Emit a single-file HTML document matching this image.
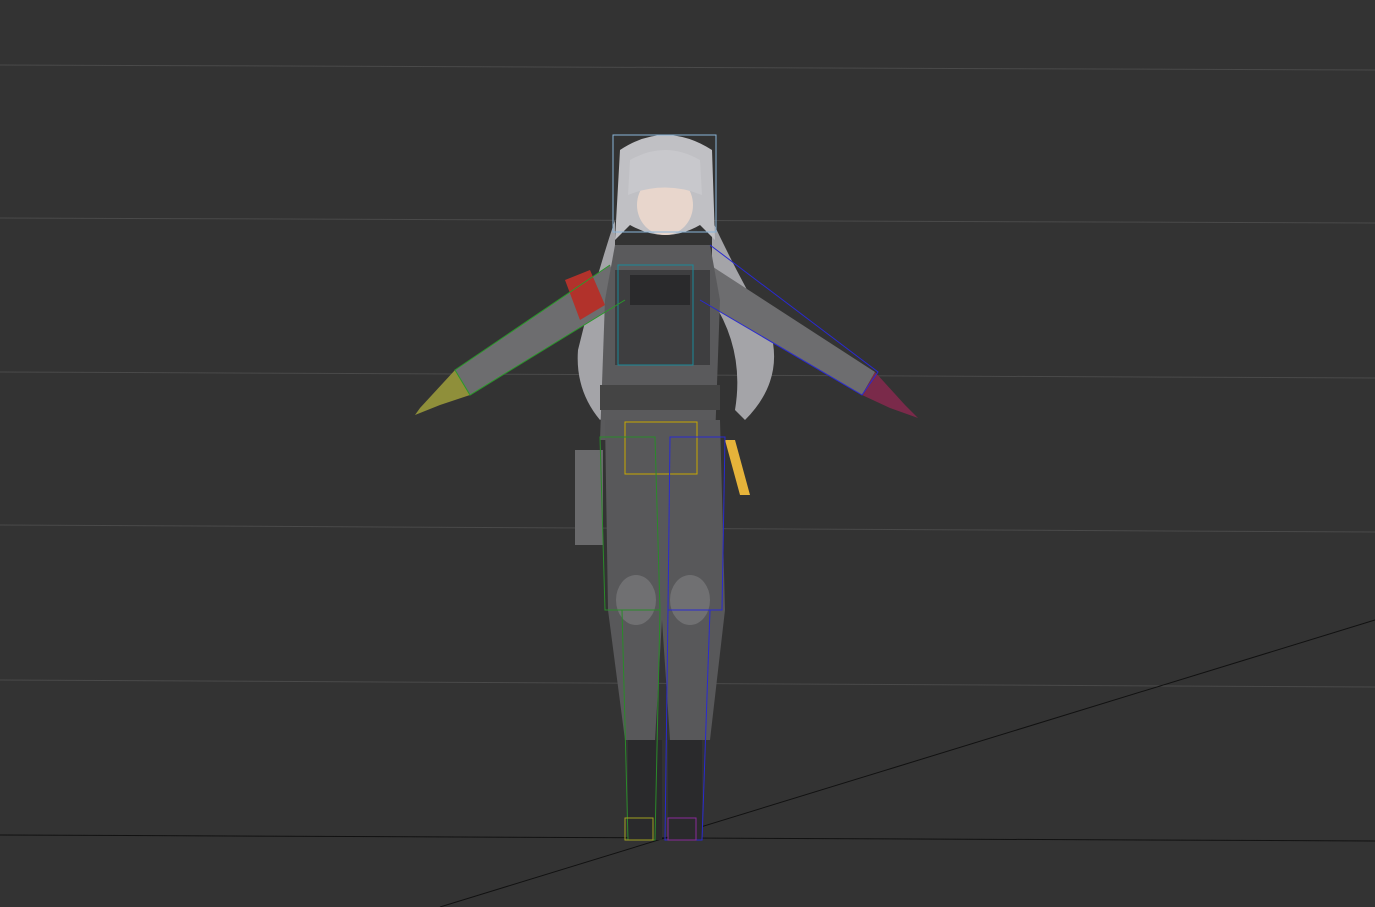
<!DOCTYPE html>
<html><head><meta charset="utf-8"><style>
html,body{margin:0;padding:0;background:#333333;}
svg{display:block}
</style></head><body>
<svg width="1375" height="907" viewBox="0 0 1375 907" xmlns="http://www.w3.org/2000/svg">
<rect width="1375" height="907" fill="#333333"/>
<g stroke="#4a4a4a" stroke-width="1" fill="none">
<line x1="0" y1="65" x2="1375" y2="70"/>
<line x1="0" y1="218" x2="1375" y2="223"/>
<line x1="0" y1="372" x2="1375" y2="378"/>
<line x1="0" y1="525" x2="1375" y2="532"/>
<line x1="0" y1="680" x2="1375" y2="687"/>
</g>
<line x1="0" y1="835" x2="1375" y2="841" stroke="#111" stroke-width="1"/>
<line x1="440" y1="907" x2="1375" y2="620" stroke="#111" stroke-width="1"/>

<!-- hair strands -->
<path d="M615 220 Q595 280 578 350 Q575 390 600 420 L612 410 Q605 350 615 300 Z" fill="#a4a4a8"/>
<path d="M712 220 Q740 280 770 330 Q785 380 745 420 L735 410 Q745 350 712 300 Z" fill="#a4a4a8"/>
<!-- arms -->
<path d="M610 265 L455 370 L470 395 L625 300 Z" fill="#6d6d6f"/>
<path d="M710 265 L875 372 L862 395 L700 300 Z" fill="#6d6d6f"/>
<path d="M565 280 L590 270 L605 305 L580 320 Z" fill="#b2322b"/>
<path d="M455 370 L470 395 L440 405 L415 415 L420 408 Z" fill="#8f8f3a"/>
<path d="M875 372 L862 395 L890 408 L918 418 L905 405 Z" fill="#7a2a4a"/>
<!-- torso -->
<path d="M615 245 L710 245 L720 300 L715 440 L600 440 L605 300 Z" fill="#5a5a5c"/>
<rect x="615" y="270" width="95" height="95" fill="#3e3e40"/>
<rect x="630" y="275" width="60" height="30" fill="#2a2a2c"/>
<rect x="600" y="385" width="120" height="25" fill="#444"/>
<!-- hips/legs -->
<path d="M605 420 L720 420 L725 610 L710 740 L670 740 L662 620 L655 740 L625 740 L608 610 Z" fill="#58585a"/>
<ellipse cx="636" cy="600" rx="20" ry="25" fill="#707072"/>
<ellipse cx="690" cy="600" rx="20" ry="25" fill="#707072"/>
<rect x="575" y="450" width="28" height="95" fill="#6a6a6c"/>
<path d="M725 440 L740 495 L750 495 L735 440 Z" fill="#e6b33a"/>
<!-- boots -->
<rect x="628" y="740" width="34" height="100" fill="#2a2a2c"/>
<rect x="668" y="740" width="34" height="100" fill="#2a2a2c"/>
<!-- head -->
<path d="M620 150 Q665 120 712 150 L715 240 L700 225 Q665 245 630 225 L615 240 Z" fill="#c0c0c4"/>
<ellipse cx="665" cy="205" rx="28" ry="30" fill="#e8d6cc"/>
<path d="M630 160 Q665 140 700 160 L702 195 Q665 180 628 195 Z" fill="#c8c8cc"/>
<!-- bone boxes -->
<g fill="none" stroke-width="1">
<rect x="613" y="135" width="103" height="97" stroke="#8ab4d8"/>
<rect x="618" y="265" width="75" height="100" stroke="#1a8a9a"/>
<rect x="625" y="422" width="72" height="52" stroke="#c8a800"/>
<path d="M600 437 L655 437 L660 610 L605 610 Z M622 610 L628 840 L655 840 L660 610" stroke="#2a8a2a"/>
<path d="M670 437 L725 437 L722 610 L668 610 Z M668 610 L665 840 L702 840 L710 610" stroke="#2a2ad0"/>
<path d="M610 265 L455 370 L470 395 L625 300" stroke="#2a9a2a"/>
<path d="M710 245 L878 372 L862 395 L700 300" stroke="#2a2ad0"/>
<rect x="625" y="818" width="28" height="22" stroke="#a0a020"/>
<rect x="668" y="818" width="28" height="22" stroke="#8a2a9a"/>
</g>
</svg>
</body></html>
